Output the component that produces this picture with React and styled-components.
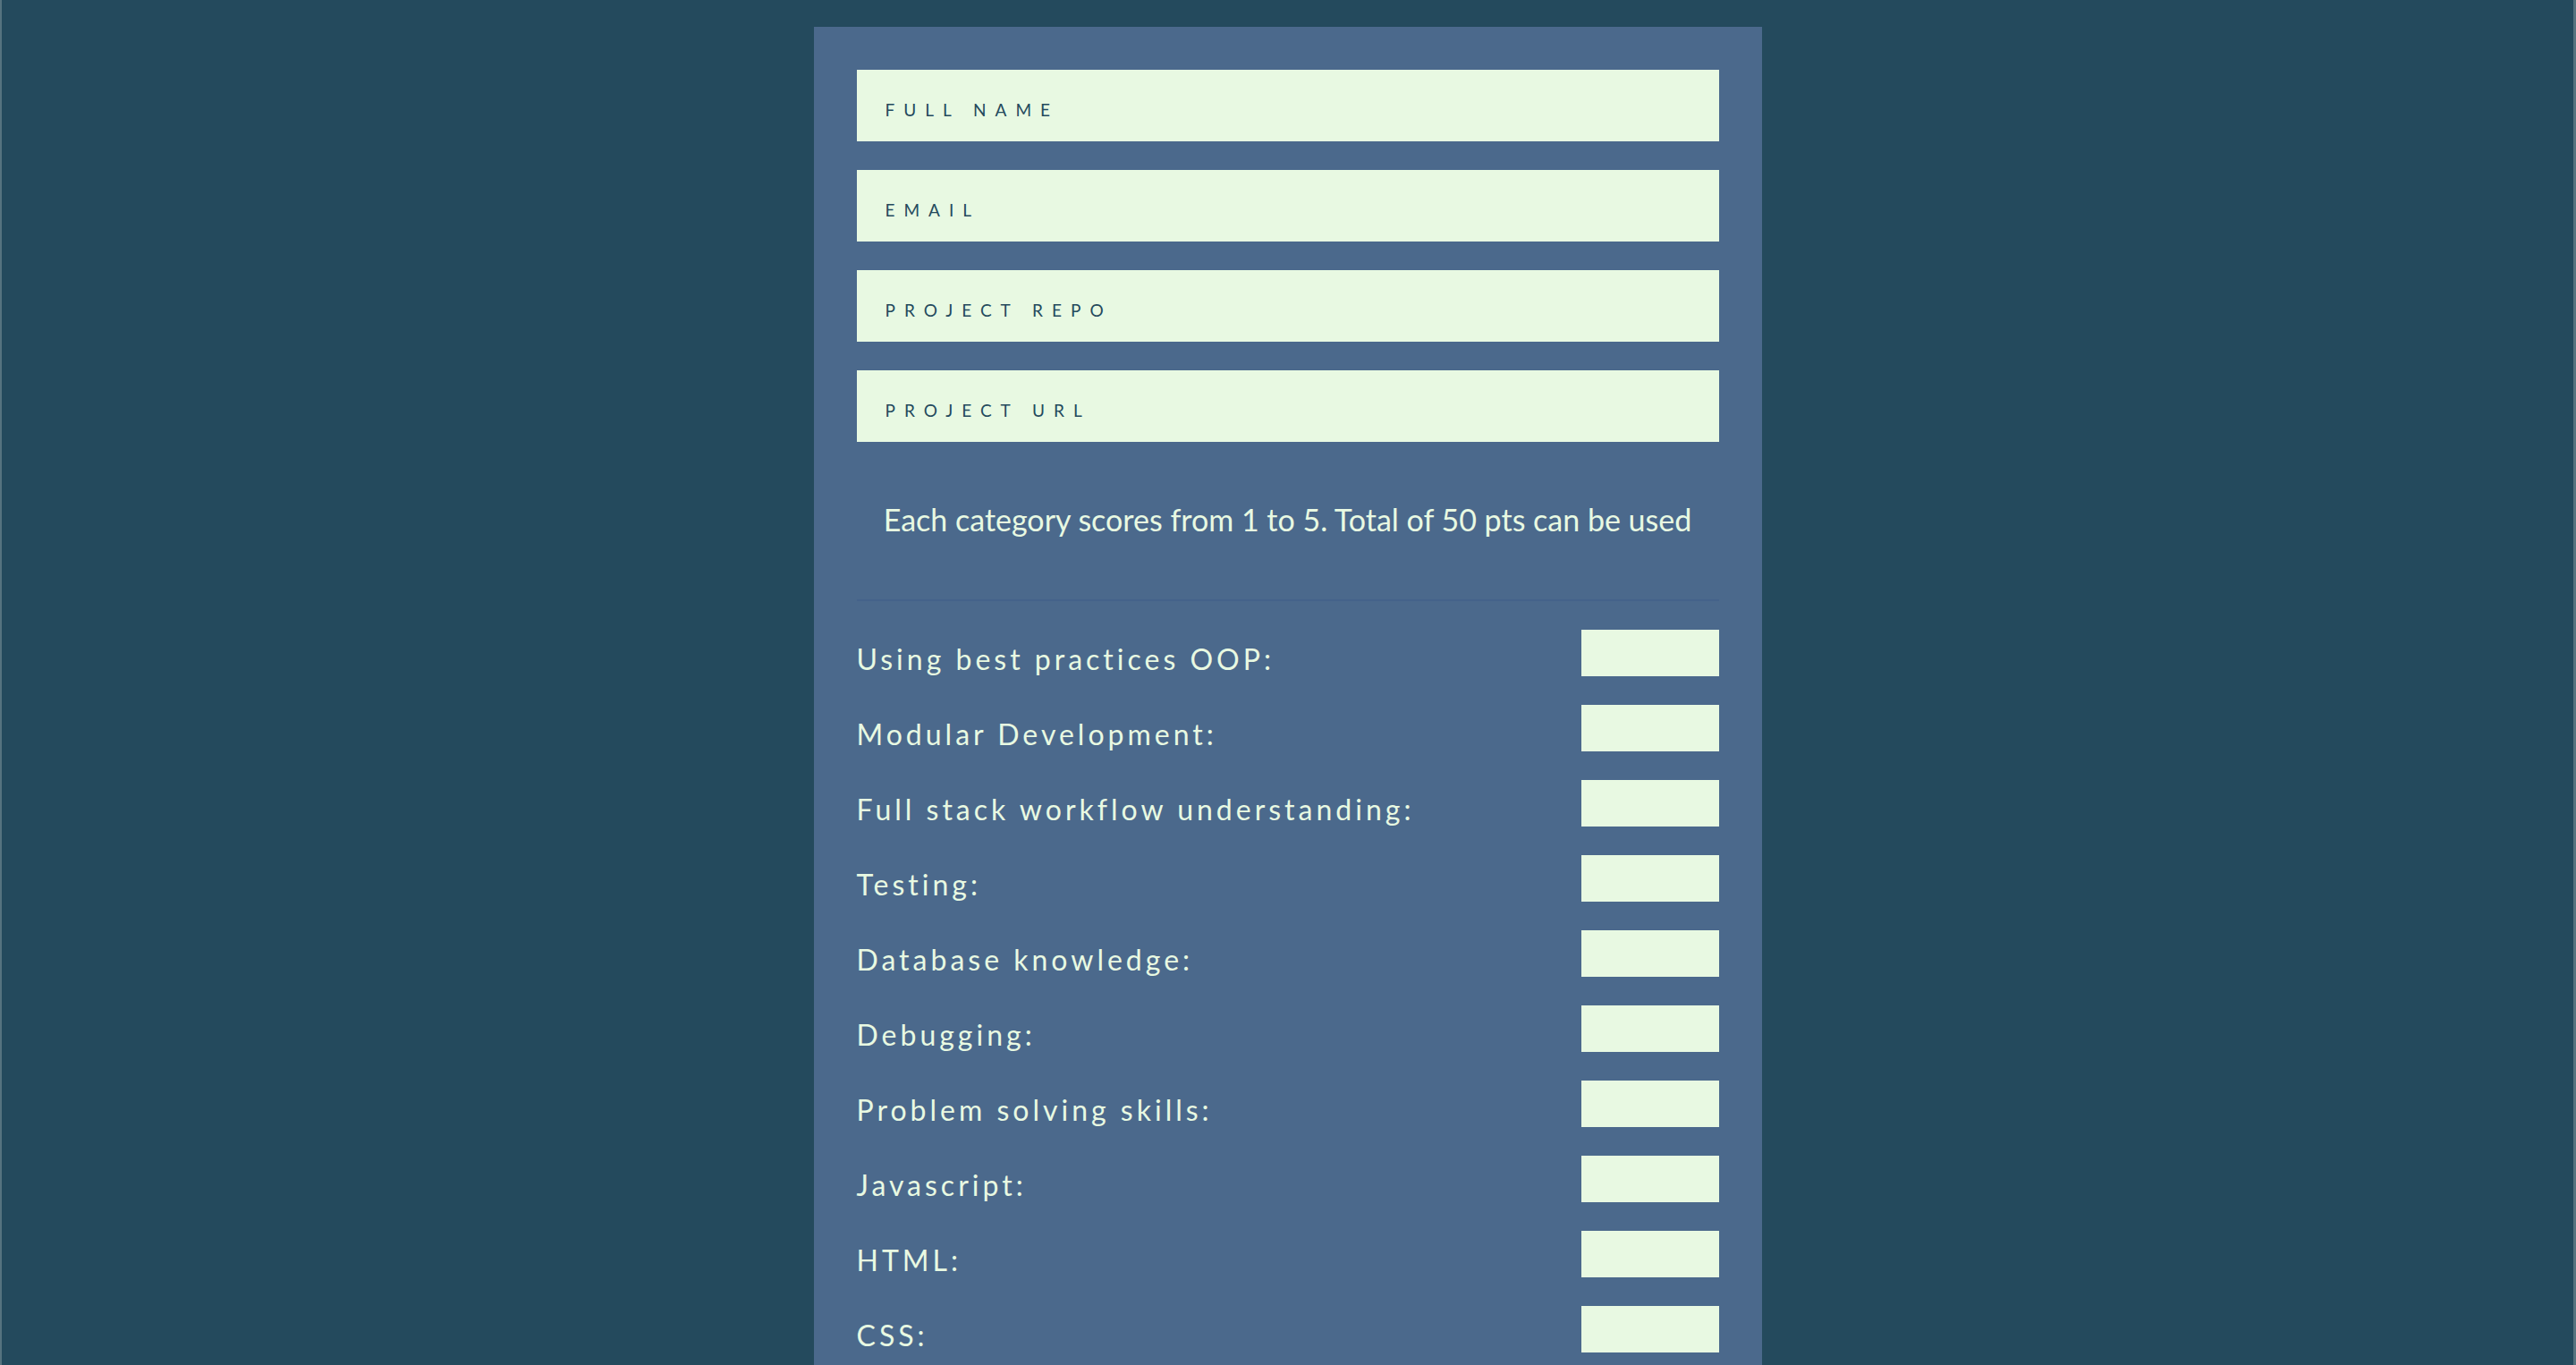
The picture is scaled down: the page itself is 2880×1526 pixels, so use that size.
import React from "react"
import styled, { createGlobalStyle } from "styled-components"

const Navy = "#244a5d"
const Slate = "#4b698c"
const Mint = "#e8f9e2"

const GlobalStyle = createGlobalStyle`
  html, body {
    margin: 0;
    padding: 0;
    background: ${Navy};
  }
  * {
    box-sizing: border-box;
  }
`

const Page = styled.div`
  min-height: 100vh;
  padding-top: 30px;
  border-left: 2px solid #56737f;
  border-right: 3px solid #56737f;
  font-family: Lato, "Open Sans", sans-serif;
`

const Form = styled.form`
  width: 1060px;
  margin: 0 auto;
  padding: 48px 48px 120px;
  background: ${Slate};
  display: flex;
  flex-direction: column;
`

const Fields = styled.div`
  display: flex;
  flex-direction: column;
  gap: 32px;
`

const TextField = styled.input`
  height: 80px;
  width: 100%;
  border: none;
  outline: none;
  padding: 8px 32px 0;
  background: ${Mint};
  color: ${Navy};
  font-family: inherit;
  font-size: 19px;
  letter-spacing: 10px;

  &::placeholder {
    color: ${Navy};
    text-transform: uppercase;
    opacity: 1;
  }
`

const Note = styled.p`
  margin: 0;
  padding: 66px 0 69px;
  text-align: center;
  font-size: 34px;
  color: ${Mint};
  border-bottom: 2px solid #44628a;
`

const Scores = styled.div`
  display: flex;
  flex-direction: column;
  gap: 32px;
  padding-top: 32px;
`

const Row = styled.label`
  display: flex;
  align-items: center;
  justify-content: space-between;
`

const Label = styled.span`
  font-size: 32px;
  letter-spacing: 4px;
  color: ${Mint};
  padding-top: 12px;
`

const ScoreBox = styled.input`
  width: 154px;
  height: 52px;
  border: none;
  outline: none;
  background: ${Mint};
  color: ${Navy};
  font-family: inherit;
  font-size: 24px;
  text-align: center;
`

const fields = ["Full name", "Email", "Project repo", "Project URL"]

const categories = [
  "Using best practices OOP:",
  "Modular Development:",
  "Full stack workflow understanding:",
  "Testing:",
  "Database knowledge:",
  "Debugging:",
  "Problem solving skills:",
  "Javascript:",
  "HTML:",
  "CSS:",
]

const App = () => (
  <Page>
    <GlobalStyle />
    <Form onSubmit={e => e.preventDefault()}>
      <Fields>
        {fields.map(f => (
          <TextField key={f} type="text" placeholder={f} />
        ))}
      </Fields>
      <Note>Each category scores from 1 to 5. Total of 50 pts can be used</Note>
      <Scores>
        {categories.map(c => (
          <Row key={c}>
            <Label>{c}</Label>
            <ScoreBox type="text" />
          </Row>
        ))}
      </Scores>
    </Form>
  </Page>
)

export default App
